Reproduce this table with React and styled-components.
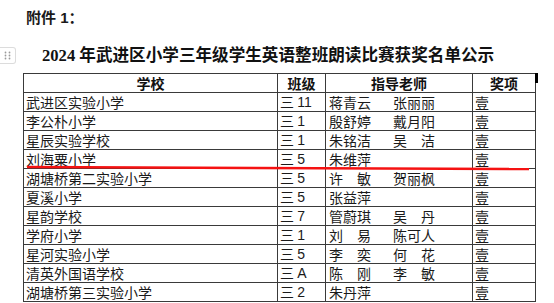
import React from "react";
import styled, { createGlobalStyle } from "styled-components";

const rows = [
  { school: "武进区实验小学", grade: "11", teachers: ["蒋青云", "张丽丽"] },
  { school: "李公朴小学", grade: "1", teachers: ["殷舒婷", "戴月阳"] },
  { school: "星辰实验学校", grade: "1", teachers: ["朱铭洁", "吴　洁"] },
  { school: "刘海粟小学", grade: "5", teachers: ["朱维萍"] },
  { school: "湖塘桥第二实验小学", grade: "5", teachers: ["许　敏", "贺丽枫"] },
  { school: "夏溪小学", grade: "5", teachers: ["张益萍"] },
  { school: "星韵学校", grade: "7", teachers: ["管蔚琪", "吴　丹"] },
  { school: "学府小学", grade: "1", teachers: ["刘　易", "陈可人"] },
  { school: "星河实验小学", grade: "5", teachers: ["李　奕", "何　花"] },
  { school: "清英外国语学校", grade: "A", teachers: ["陈　刚", "李　敏"] },
  { school: "湖塘桥第三实验小学", grade: "2", teachers: ["朱丹萍"] }
];

export default function App() {
  return (
    <Page>
      <GlobalStyle />
      <Attachment>附件 1：</Attachment>
      <TitleRow>
        <Handle>
          <svg width="7" height="9" viewBox="0 0 7 9">
            {[0, 1, 2].map(r =>
              [0, 1].map(c => (
                <circle key={`${r}-${c}`} cx={1.5 + c * 4} cy={1.5 + r * 3} r="0.9" fill="#9a9a9a" />
              ))
            )}
          </svg>
        </Handle>
        <Title>2024 年武进区小学三年级学生英语整班朗读比赛获奖名单公示</Title>
      </TitleRow>
      <Table>
        <colgroup>
          <col style={{ width: 254 }} />
          <col style={{ width: 48 }} />
          <col style={{ width: 147 }} />
          <col style={{ width: 63 }} />
        </colgroup>
        <thead>
          <tr>
            <HeadCell>学校</HeadCell>
            <HeadCell>班级</HeadCell>
            <HeadCell>指导老师</HeadCell>
            <HeadCell $last>奖项</HeadCell>
          </tr>
        </thead>
        <tbody>
          {rows.map(row => (
            <tr key={row.school}>
              <Cell>{row.school}</Cell>
              <Cell>
                三 <Latin>{row.grade}</Latin>
              </Cell>
              <Cell $pad={3}>
                {row.teachers.map(name => (
                  <Slot key={name}>{name}</Slot>
                ))}
              </Cell>
              <Cell>壹</Cell>
            </tr>
          ))}
        </tbody>
      </Table>
      <Mark width="554" height="303" viewBox="0 0 554 303">
        <line x1="27" y1="167" x2="529" y2="169" stroke="#f51212" strokeWidth="2.5" />
      </Mark>
    </Page>
  );
}

const GlobalStyle = createGlobalStyle`
  html, body {
    margin: 0;
    background: #ffffff;
  }
  body {
    font-family: "Noto Sans CJK SC", sans-serif;
    color: #111111;
  }
`;

const Page = styled.div`
  position: relative;
  width: 554px;
  height: 303px;
  overflow: hidden;
  padding-top: 8px;
  box-sizing: border-box;
`;

const Attachment = styled.div`
  margin-left: 26px;
  font-size: 15px;
  line-height: 20px;
  font-weight: 700;
  font-family: "Liberation Sans", "Noto Sans CJK SC", sans-serif;
  color: #1a1a1a;
`;

const TitleRow = styled.div`
  display: flex;
  align-items: center;
  gap: 26px;
  margin-top: 18px;
  height: 19px;
  margin-bottom: 8px;
`;

const Handle = styled.div`
  width: 16px;
  height: 17px;
  border: 1px solid #dcdcdc;
  border-left: none;
  border-radius: 0 3px 3px 0;
  display: flex;
  align-items: center;
  justify-content: center;
  box-sizing: border-box;
  flex: none;
`;

const Title = styled.div`
  font-family: "Liberation Serif", "Noto Sans CJK SC", serif;
  font-size: 16.6px;
  font-weight: 700;
  line-height: 19px;
  color: #111111;
  white-space: nowrap;
`;

const Table = styled.table`
  margin-left: 23px;
  width: 513px;
  table-layout: fixed;
  border-collapse: collapse;
  font-size: 14px;
`;

const HeadCell = styled.th`
  position: relative;
  height: 18px;
  padding: 0;
  border: 1px solid #3a3a3a;
  font-weight: 700;
  line-height: 17px;
  text-align: center;
  color: #111111;

  ${p =>
    p.$last &&
    `
    &::after {
      content: "";
      position: absolute;
      right: -3px;
      top: -1px;
      width: 3px;
      height: 10px;
      background: #000000;
    }
  `}
`;

const Cell = styled.td`
  height: 18px;
  padding: 0 0 0 ${p => p.$pad || 2}px;
  border: 1px solid #3a3a3a;
  line-height: 17px;
  white-space: nowrap;
  overflow: hidden;
  color: #1a1a1a;
`;

const Latin = styled.span`
  font-family: "Liberation Sans", sans-serif;
  font-size: 14px;
`;

const Slot = styled.span`
  display: inline-block;
  width: 64px;
`;

const Mark = styled.svg`
  position: absolute;
  left: 0;
  top: 0;
  pointer-events: none;
`;
